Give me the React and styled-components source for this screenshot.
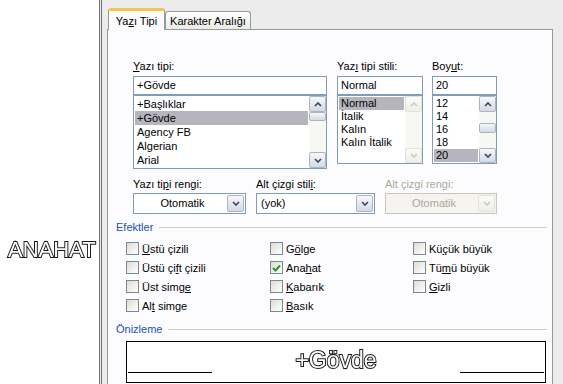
import React from 'react'
import styled, { createGlobalStyle } from 'styled-components'

const GlobalStyle = createGlobalStyle`
  html, body {
    margin: 0;
    padding: 0;
    background: #fff;
  }
  body {
    font-family: "Liberation Sans", Arial, sans-serif;
    font-size: 11px;
    color: #000;
  }
`

const Page = styled.div`
  display: flex;
  width: 563px;
  height: 384px;
  overflow: hidden;
  background: #fff;
`

const Margin = styled.div`
  flex: none;
  width: 99px;
  padding-top: 237px;
  box-sizing: border-box;
`

const OutlineText = styled.div`
  font-family: "Liberation Sans", Arial, sans-serif;
  font-size: ${p => p.$size || 22}px;
  line-height: ${p => p.$lh || 26}px;
  padding-left: ${p => p.$indent || 0}px;
  text-align: ${p => p.$align || 'left'};
  color: #fff;
  -webkit-text-stroke: 2px #1b1b1b;
  paint-order: stroke fill;
  white-space: nowrap;
  will-change: transform;
`

const Dialog = styled.div`
  flex: 1;
  display: flex;
  flex-direction: column;
  background: #ececec;
  border-left: 3px double #707070;
  padding: 8px 10px 0 5px;
  min-width: 0;
`

const TabStrip = styled.div`
  display: flex;
  align-items: flex-end;
  height: 21px;
  padding-left: 1px;
`

const Tab = styled.div`
  box-sizing: border-box;
  width: ${p => p.$w}px;
  height: ${p => (p.$active ? 22 : 18)}px;
  margin-bottom: ${p => (p.$active ? -1 : 0)}px;
  position: relative;
  z-index: ${p => (p.$active ? 2 : 1)};
  display: flex;
  align-items: center;
  justify-content: center;
  padding-top: ${p => (p.$active ? 0 : 1)}px;
  border: 1px solid #919b9c;
  border-bottom: none;
  border-top: ${p => (p.$active ? '3px solid #f8c44c' : '1px solid #919b9c')};
  border-radius: 3px 3px 0 0;
  background: ${p => (p.$active ? '#fcfcfe' : 'linear-gradient(#ffffff, #ecebe6)')};
`

const Panel = styled.div`
  flex: 1;
  background: #fcfcfe;
  border: 1px solid #919b9c;
  border-bottom: none;
  padding-top: 29px;
`

const Key = styled.span`
  text-decoration: underline;
  text-underline-offset: 1px;
`

const PickerRow = styled.div`
  display: flex;
  padding-left: 25px;
  gap: 10px;
  align-items: flex-start;
`

const Field = styled.div`
  width: ${p => p.$w}px;
  margin-left: ${p => p.$ml || 0}px;
  display: flex;
  flex-direction: column;
`

const Label = styled.div`
  height: 14px;
  line-height: 14px;
  margin-bottom: ${p => (p.$gap != null ? p.$gap : 3)}px;
  color: ${p => (p.$disabled ? '#aca899' : '#000')};
  white-space: nowrap;
`

const TextBox = styled.div`
  box-sizing: border-box;
  height: 19px;
  border: 1px solid #7f9db9;
  background: #fff;
  padding-left: 3px;
  line-height: 17px;
  white-space: nowrap;
`

const ListBox = styled.div`
  box-sizing: border-box;
  height: ${p => p.$h}px;
  border: 1px solid #7f9db9;
  background: #fff;
  display: flex;
  overflow: hidden;
`

const Items = styled.div`
  flex: 1;
  padding: 1px 1px 0 1px;
  min-width: 0;
`

const Item = styled.div`
  height: ${p => p.$h}px;
  line-height: ${p => p.$h}px;
  padding-left: 2px;
  white-space: nowrap;
  background: ${p => (p.$selected ? '#b6b5bd' : 'transparent')};
`

const ScrollBar = styled.div`
  flex: none;
  width: 17px;
  display: flex;
  flex-direction: column;
  background: #f7f7f4;
`

const Track = styled.div`
  flex: 1;
  display: flex;
  flex-direction: column;
`

const ArrowButton = styled.div`
  box-sizing: border-box;
  height: ${p => p.$h || 15}px;
  border: 1px solid ${p => (p.$disabled ? '#e3e3dc' : '#a9b4c4')};
  border-radius: 2px;
  background: ${p =>
    p.$disabled
      ? 'linear-gradient(#fbfbf8, #efefe9)'
      : 'linear-gradient(#f7f8fa, #d4d9e2)'};
  display: flex;
  align-items: center;
  justify-content: center;
`

const Thumb = styled(ArrowButton)`
  margin-top: ${p => p.$offset}px;
  margin-bottom: 1px;
`

const Chevron = ({ down, disabled }) => (
  <svg width="8" height="5" viewBox="0 0 8 5">
    <polyline
      points={down ? '1,1 4,4 7,1' : '1,4 4,1 7,4'}
      fill="none"
      stroke={disabled ? '#cdcbc0' : '#34445c'}
      strokeWidth="1.6"
    />
  </svg>
)

const Scroller = ({ thumb, offset, disabled, downH }) => (
  <ScrollBar>
    <ArrowButton $disabled={disabled} $h={16}>
      <Chevron disabled={disabled} />
    </ArrowButton>
    <Track>
      {thumb && <Thumb $h={thumb} $offset={offset} />}
    </Track>
    <ArrowButton $disabled={disabled} $h={downH || 15}>
      <Chevron down disabled={disabled} />
    </ArrowButton>
  </ScrollBar>
)

const ComboRow = styled.div`
  display: flex;
  padding-left: 25px;
  gap: 10px;
  margin-top: 8px;
`

const Combo = styled.div`
  box-sizing: border-box;
  height: 21px;
  border: 1px solid ${p => (p.$disabled ? '#c9c7ba' : '#7f9db9')};
  background: ${p => (p.$disabled ? '#f5f4ee' : '#fff')};
  display: flex;
  align-items: stretch;
  padding: 1px;
`

const ComboText = styled.div`
  flex: 1;
  line-height: 17px;
  padding-left: 3px;
  text-align: ${p => (p.$center ? 'center' : 'left')};
  color: ${p => (p.$disabled ? '#aca899' : '#000')};
  white-space: nowrap;
`

const DropButton = styled(ArrowButton)`
  width: 17px;
  height: auto;
`

const GroupHeader = styled.div`
  display: flex;
  align-items: center;
  height: 14px;
  padding: 0 5px 0 8px;
  margin-top: ${p => p.$top}px;
  color: #2150b4;
  &::after {
    content: '';
    flex: 1;
    height: 1px;
    margin-left: 6px;
    background: #d0d0bf;
  }
`

const Effects = styled.div`
  display: grid;
  grid-template-columns: 144px 143px 1fr;
  grid-template-rows: repeat(4, 19px);
  grid-auto-flow: column;
  padding-left: 18px;
  margin-top: 5px;
`

const Option = styled.div`
  display: flex;
  align-items: center;
  gap: 3px;
  white-space: nowrap;
`

const Box = styled.div`
  box-sizing: border-box;
  width: 13px;
  height: 13px;
  border: 1px solid #7a8796;
  background: linear-gradient(135deg, #dcdcd6, #ffffff);
  display: flex;
  align-items: center;
  justify-content: center;
`

const Check = () => (
  <svg width="9" height="8" viewBox="0 0 9 8">
    <polyline points="1,4 3.5,6.5 8,1.5" fill="none" stroke="#21a121" strokeWidth="2" />
  </svg>
)

const Preview = styled.div`
  box-sizing: border-box;
  margin: 5px 0 0 18px;
  width: 420px;
  height: 42px;
  border: 1px solid #000;
  background: #fff;
  display: grid;
  grid-template-columns: 84px 1fr 84px;
  padding: 0 1px;
`

const Rule = styled.div`
  align-self: end;
  height: 1px;
  margin-bottom: 9px;
  background: #000;
`

const fonts = ['+Başlıklar', '+Gövde', 'Agency FB', 'Algerian', 'Arial']
const styles = ['Normal', 'İtalik', 'Kalın', 'Kalın İtalik']
const sizes = ['12', '14', '16', '18', '20']

const effects = [
  { label: <><Key>Ü</Key>stü çizili</> },
  { label: <>Üstü çi<Key>f</Key>t çizili</> },
  { label: <>Üst simg<Key>e</Key></> },
  { label: <>Al<Key>t</Key> simge</> },
  { label: <>G<Key>ö</Key>lge</> },
  { label: <>Ana<Key>h</Key>at</>, checked: true },
  { label: <><Key>K</Key>abarık</> },
  { label: <><Key>B</Key>asık</> },
  { label: <>Kü<Key>ç</Key>ük büyük</> },
  { label: <>Tü<Key>m</Key>ü büyük</> },
  { label: <><Key>G</Key>izli</> },
]

export default function App () {
  return (
    <Page>
      <GlobalStyle />
      <Margin>
        <OutlineText $indent={8}>ANAHAT</OutlineText>
      </Margin>
      <Dialog>
        <TabStrip>
          <Tab $active $w={57}>Ya<Key>z</Key>ı Tipi</Tab>
          <Tab $w={86}>Karakter Aralığı</Tab>
        </TabStrip>
        <Panel>
          <PickerRow>
            <Field $w={194}>
              <Label><Key>Y</Key>azı tipi:</Label>
              <TextBox>+Gövde</TextBox>
              <ListBox $h={74}>
                <Items>
                  {fonts.map(f => (
                    <Item key={f} $h={14} $selected={f === '+Gövde'}>{f}</Item>
                  ))}
                </Items>
                <Scroller thumb={9} offset={0} downH={16} />
              </ListBox>
            </Field>
            <Field $w={86}>
              <Label>Yaz<Key>ı</Key> tipi stili:</Label>
              <TextBox>Normal</TextBox>
              <ListBox $h={69}>
                <Items>
                  {styles.map(s => (
                    <Item key={s} $h={13} $selected={s === 'Normal'}>{s}</Item>
                  ))}
                </Items>
                <Scroller disabled />
              </ListBox>
            </Field>
            <Field $w={65} $ml={-1}>
              <Label>Boy<Key>u</Key>t:</Label>
              <TextBox>20</TextBox>
              <ListBox $h={69}>
                <Items>
                  {sizes.map(s => (
                    <Item key={s} $h={13} $selected={s === '20'}>{s}</Item>
                  ))}
                </Items>
                <Scroller thumb={10} offset={11} />
              </ListBox>
            </Field>
          </PickerRow>

          <ComboRow>
            <Field $w={113}>
              <Label $gap={2}>Yazı ti<Key>p</Key>i rengi:</Label>
              <Combo>
                <ComboText $center>Otomatik</ComboText>
                <DropButton><Chevron down /></DropButton>
              </Combo>
            </Field>
            <Field $w={119}>
              <Label $gap={2}>Alt çizgi stil<Key>i</Key>:</Label>
              <Combo>
                <ComboText>(yok)</ComboText>
                <DropButton><Chevron down /></DropButton>
              </Combo>
            </Field>
            <Field $w={112}>
              <Label $gap={2} $disabled>Alt çizgi rengi:</Label>
              <Combo $disabled>
                <ComboText $center $disabled>Otomatik</ComboText>
                <DropButton $disabled><Chevron down disabled /></DropButton>
              </Combo>
            </Field>
          </ComboRow>

          <GroupHeader $top={6}>Efektler</GroupHeader>
          <Effects>
            {effects.map((e, i) => (
              <Option key={i}>
                <Box>{e.checked && <Check />}</Box>
                <span>{e.label}</span>
              </Option>
            ))}
          </Effects>

          <GroupHeader $top={7}>Önizleme</GroupHeader>
          <Preview>
            <Rule />
            <OutlineText $size={23} $lh={36} $align="center">+Gövde</OutlineText>
            <Rule />
          </Preview>
        </Panel>
      </Dialog>
    </Page>
  )
}
